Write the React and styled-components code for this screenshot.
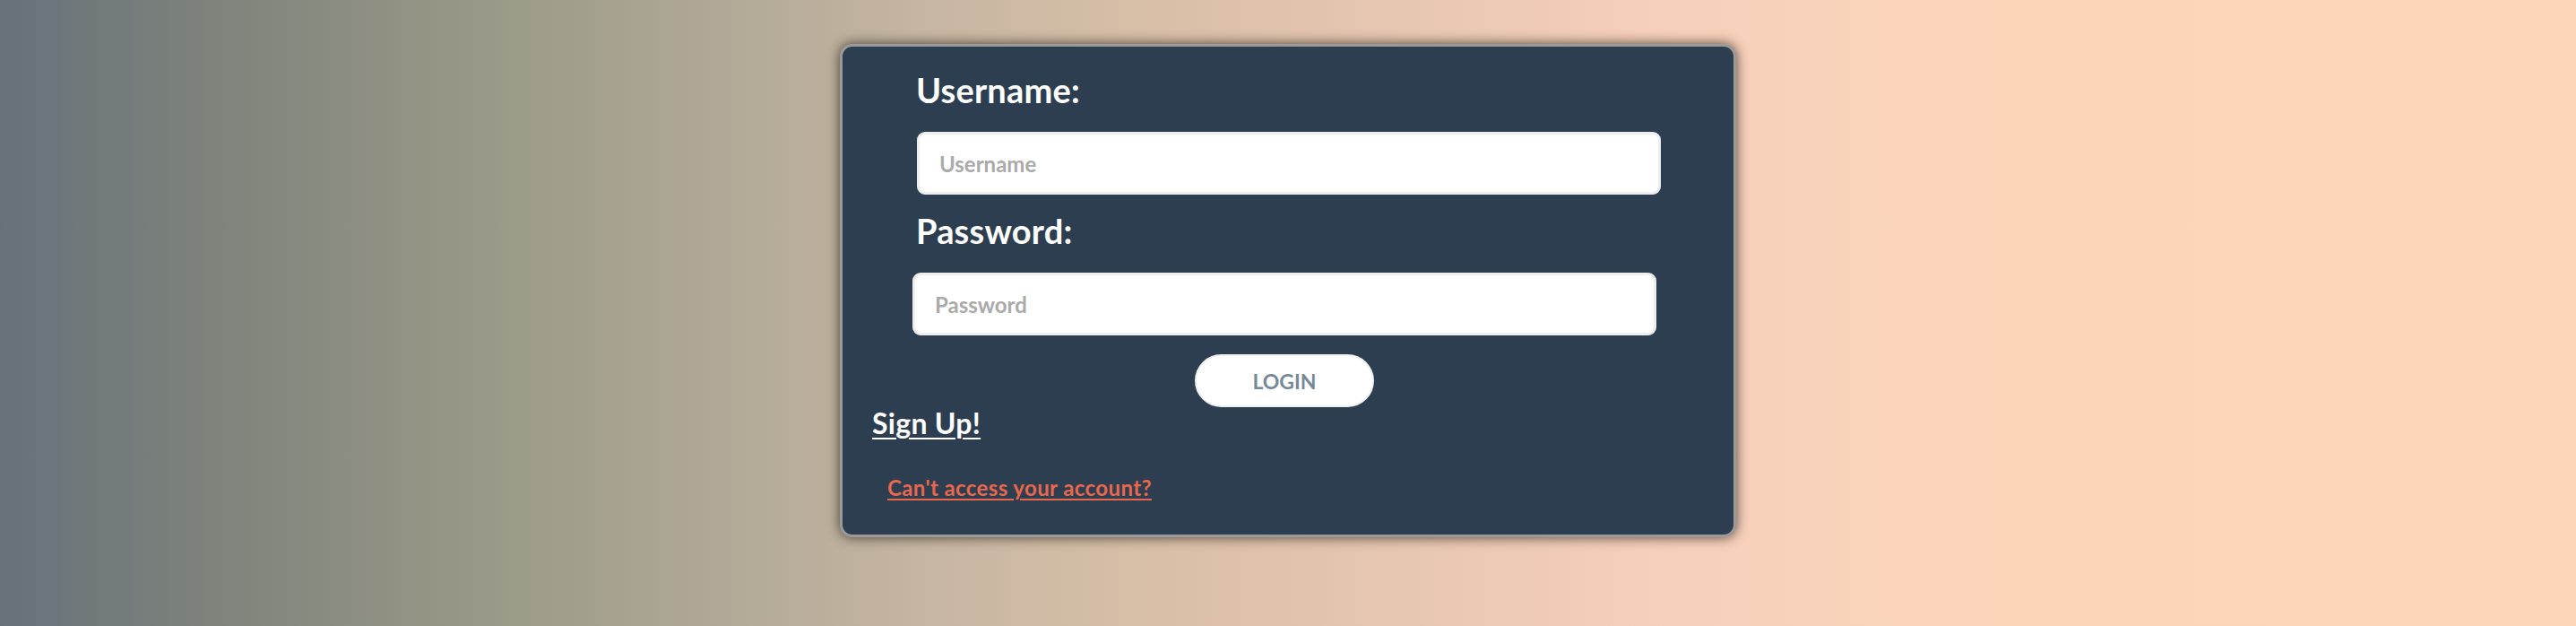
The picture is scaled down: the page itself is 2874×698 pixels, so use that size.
import React from 'react';
import styled, { createGlobalStyle } from 'styled-components';

const GlobalStyle = createGlobalStyle`
  html, body {
    margin: 0;
    padding: 0;
    height: 100%;
  }
  body {
    font-family: 'Lato', 'Liberation Sans', sans-serif;
    background: linear-gradient(
      to right,
      #66717a 0%,
      #7d827b 8%,
      #959585 17%,
      #aea795 27%,
      #c6b6a2 36%,
      #d9bfa8 45%,
      #e8c7b1 55%,
      #f6d0bb 65%,
      #fcd4ba 78%,
      #fdd5bb 100%
    );
    min-height: 698px;
  }
`;

function App() {
  return (
    <>
      <GlobalStyle />
      <Page>
        <Card>
          <Fields>
            <Label>Username:</Label>
            <Input $shift={5} type="text" placeholder="Username" />
            <Label $top={17}>Password:</Label>
            <Input type="password" placeholder="Password" />
            <LoginButton>LOGIN</LoginButton>
          </Fields>
          <SignUp href="#">Sign Up!</SignUp>
          <Forgot href="#">Can't access your account?</Forgot>
        </Card>
      </Page>
    </>
  );
}

const Page = styled.div`
  height: 698px;
  display: flex;
  justify-content: center;
  align-items: flex-start;
  padding-top: 49px;
  box-sizing: border-box;
`;

const Card = styled.div`
  width: 1000px;
  box-sizing: border-box;
  background: #2c3e50;
  border: 3px solid #9a9a9a;
  border-radius: 14px;
  box-shadow: 0 0 14px rgba(40, 30, 20, 0.8);
  padding: 25px 0 38px;
  display: flex;
  flex-direction: column;
  align-items: flex-start;
`;

const Fields = styled.div`
  width: 830px;
  margin-left: 78px;
  display: flex;
  flex-direction: column;
  align-items: flex-start;
`;

const Label = styled.label`
  font-size: 38px;
  line-height: 46px;
  font-weight: 700;
  letter-spacing: 0.2px;
  color: #ffffff;
  margin: ${(p) => p.$top || 0}px 0 24px 4px;
`;

const Input = styled.input`
  width: 830px;
  height: 70px;
  box-sizing: border-box;
  margin-left: ${(p) => p.$shift || 0}px;
  border: 3px solid #eeeeee;
  border-radius: 9px;
  background: #ffffff;
  padding: 0 22px;
  font-family: 'Lato', 'Liberation Sans', sans-serif;
  font-size: 24px;
  font-weight: 700;
  color: #444;
  outline: none;
  &::placeholder {
    color: #aaaaaa;
  }
`;

const LoginButton = styled.button`
  align-self: center;
  margin-top: 21px;
  width: 200px;
  height: 59px;
  border-radius: 30px;
  border: 2px solid #eef0f3;
  background: #ffffff;
  color: #778899;
  font-family: 'Lato', 'Liberation Sans', sans-serif;
  font-size: 23px;
  font-weight: 700;
  cursor: pointer;
`;

const SignUp = styled.a`
  margin-left: 33px;
  font-size: 32px;
  line-height: 36px;
  font-weight: 700;
  letter-spacing: 0.3px;
  color: #ffffff;
  text-decoration: underline;
  text-underline-offset: 4px;
  text-decoration-thickness: 2px;
`;

const Forgot = styled.a`
  margin: 40px 0 0 50px;
  font-size: 24px;
  line-height: 28px;
  font-weight: 700;
  letter-spacing: 0.4px;
  color: #e8674d;
  text-decoration: underline;
  text-underline-offset: 3px;
  text-decoration-thickness: 2px;
`;

export default App;
